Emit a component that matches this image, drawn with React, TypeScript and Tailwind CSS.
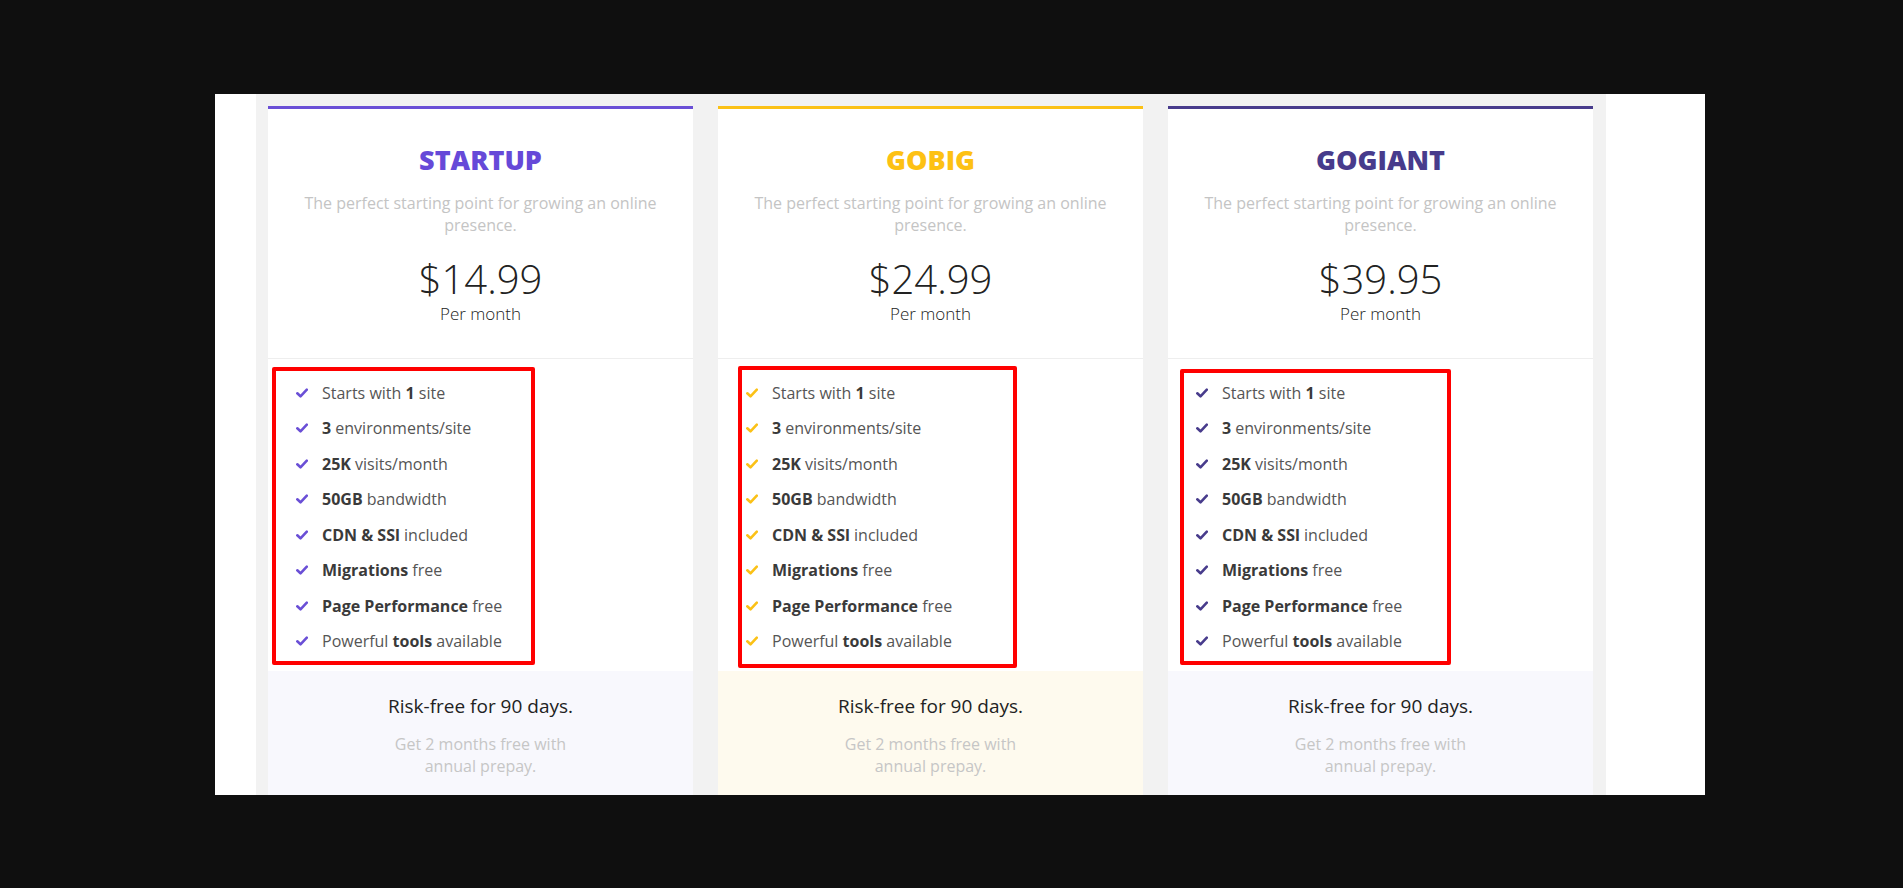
import React from 'react';

type Plan = {
  name: string;
  price: string;
  titleClass: string;
  borderClass: string;
  checkClass: string;
  footerClass: string;
  // red highlight box drawn over the feature list
  markClass: string;
};

const plans: Plan[] = [
  {
    name: 'STARTUP',
    price: '$14.99',
    titleClass: 'text-[#6649d8]',
    borderClass: 'border-t-[#6a4fd6]',
    checkClass: 'text-[#6a4fd6]',
    footerClass: 'bg-[#f8f8fd]',
    markClass: 'left-[4px] top-[258px] w-[263px] h-[298px]',
  },
  {
    name: 'GOBIG',
    price: '$24.99',
    titleClass: 'text-[#fdc113]',
    borderClass: 'border-t-[#fbc116]',
    checkClass: 'text-[#fbc116]',
    footerClass: 'bg-[#fefaee]',
    markClass: 'left-[20px] top-[257px] w-[279px] h-[302px]',
  },
  {
    name: 'GOGIANT',
    price: '$39.95',
    titleClass: 'text-[#473b8c]',
    borderClass: 'border-t-[#483c8c]',
    checkClass: 'text-[#483c8c]',
    footerClass: 'bg-[#f8f8fd]',
    markClass: 'left-[12px] top-[260px] w-[271px] h-[296px]',
  },
];

const features: React.ReactNode[] = [
  <>Starts with <b className="font-bold text-[#3a3a3a]">1</b> site</>,
  <><b className="font-bold text-[#3a3a3a]">3</b> environments/site</>,
  <><b className="font-bold text-[#3a3a3a]">25K</b> visits/month</>,
  <><b className="font-bold text-[#3a3a3a]">50GB</b> bandwidth</>,
  <><b className="font-bold text-[#3a3a3a]">CDN &amp; SSl</b> included</>,
  <><b className="font-bold text-[#3a3a3a]">Migrations</b> free</>,
  <><b className="font-bold text-[#3a3a3a]">Page Performance</b> free</>,
  <>Powerful <b className="font-bold text-[#3a3a3a]">tools</b> available</>,
];

const CheckIcon: React.FC<{ className: string }> = ({ className }) => (
  <svg className={`w-[12px] h-[10px] shrink-0 ${className}`} viewBox="0 0 12 10" fill="none">
    <path d="M1.3 5.3 L4.5 8.3 L10.8 1.6" stroke="currentColor" strokeWidth={2.6} strokeLinecap="round" strokeLinejoin="round" />
  </svg>
);

const PlanCard: React.FC<{ plan: Plan }> = ({ plan }) => (
  <div className={`relative w-[425px] shrink-0 bg-white border-t-[3px] ${plan.borderClass}`}>
    {/* Header */}
    <div className="pt-[33px] pb-[33px] px-[28px] text-center border-b border-[#eeeeee]">
      <h2 className={`text-[27px] leading-[36px] font-extrabold ${plan.titleClass}`}>{plan.name}</h2>
      <p className="mt-[14px] text-[16px] leading-[22px] text-[#c4c4c4]">
        The perfect starting point for growing an online presence.
      </p>
      <div className="mt-[23px] text-[40px] leading-[40px] font-light text-[#222]">{plan.price}</div>
      <div className="mt-[4px] text-[17px] leading-[22px] font-light text-[#222]">Per month</div>
    </div>

    {/* Features */}
    <ul className="pt-[16px] pb-[12px] pl-[28px]">
      {features.map((f, i) => (
        <li key={i} className="flex items-center h-[35.5px] gap-[14px] text-[16px] text-[#555]">
          <CheckIcon className={plan.checkClass} />
          <span className="whitespace-nowrap">{f}</span>
        </li>
      ))}
    </ul>

    {/* Footer */}
    <div className={`pt-[23px] pb-[30px] text-center ${plan.footerClass}`}>
      <div className="text-[19px] leading-[24px] text-[#222]">Risk-free for 90 days.</div>
      <p className="mt-[15px] mx-auto max-w-[190px] text-[16px] leading-[22px] text-[#c6c6c6]">
        Get 2 months free with annual prepay.
      </p>
    </div>

    {/* highlight annotation */}
    <div className={`absolute border-4 border-[#ff0000] rounded-[2px] pointer-events-none ${plan.markClass}`} />
  </div>
);

const App: React.FC = () => {
  return (
    <div className="min-h-[888px] bg-[#0f0f0f] pt-[94px] pl-[215px] font-['Open_Sans',sans-serif]">
      <div className="w-[1490px] h-[701px] bg-white overflow-hidden pl-[41px]">
        <div className="w-[1350px] h-[760px] bg-[#f2f2f2] pt-[12px] px-[12px] flex gap-[25px]">
          {plans.map((p) => (
            <PlanCard key={p.name} plan={p} />
          ))}
        </div>
      </div>
    </div>
  );
};

export default App;
